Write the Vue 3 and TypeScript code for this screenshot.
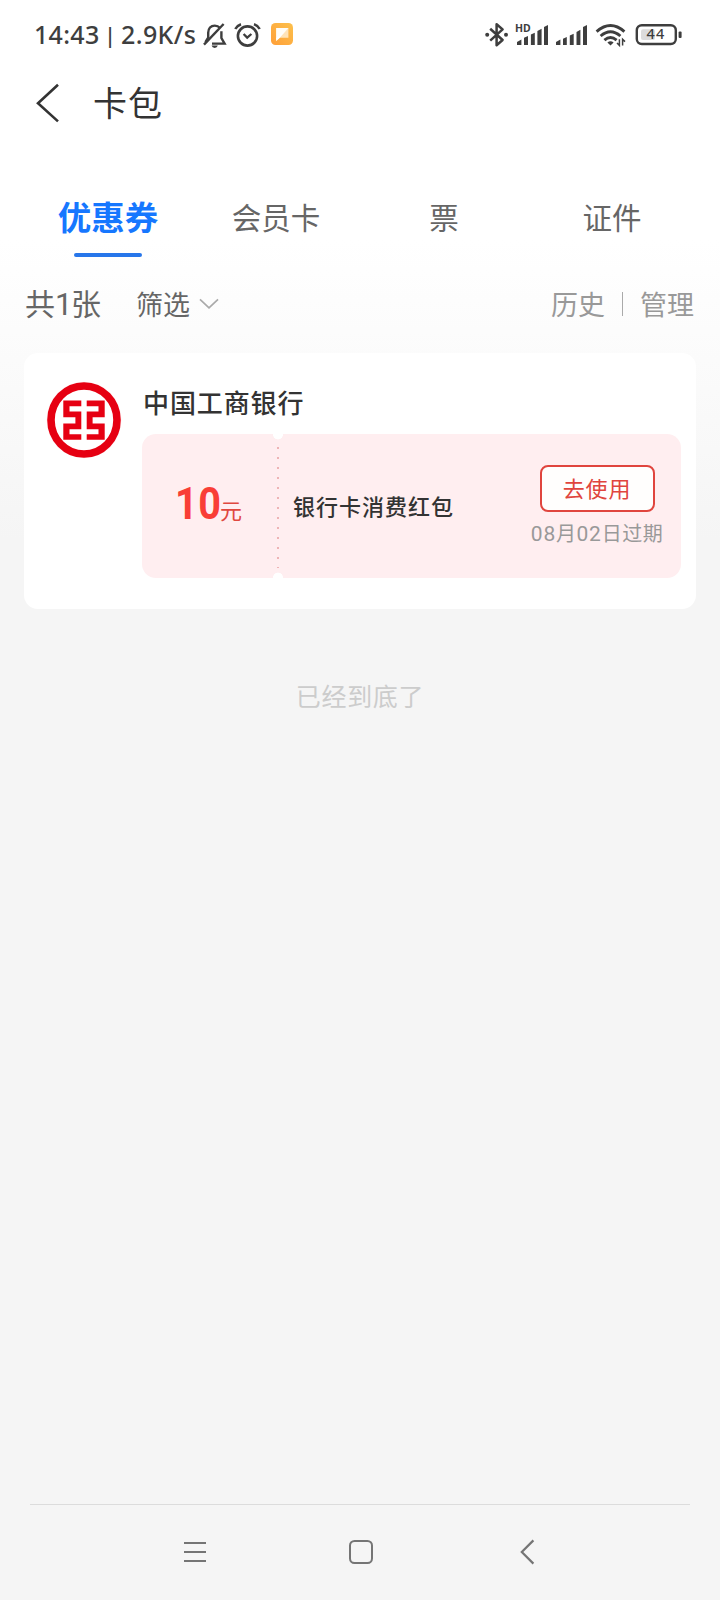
<script setup lang="ts">
interface Tab {
  label: string
  active: boolean
}

const tabs: Tab[] = [
  { label: '优惠券', active: true },
  { label: '会员卡', active: false },
  { label: '票', active: false },
  { label: '证件', active: false },
]

const coupon = {
  bank: '中国工商银行',
  amount: '10',
  unit: '元',
  name: '银行卡消费红包',
  expiry: { month: '08', day: '02' },
}
</script>

<template>
  <div class="screen">
    <header class="status">
      <div class="status-left">
        <span class="clock">14:43</span>
        <span class="pipe">|</span>
        <span class="speed">2.9K/s</span>
        <svg class="bell" width="24" height="26" viewBox="0 0 24 26" fill="none" stroke="#3e3e3e" stroke-width="2.4">
          <path d="M5.2 15V9.8C5.2 5.3 7.8 2.6 11.8 2.6C14 2.6 15.6 3.4 16.8 4.8M18.4 8.2V15L21.6 20.6H9M5.2 14.5L2.4 19.2" />
          <path d="M1 21.6L20.6 1" />
          <path d="M8.6 22.6H14.8A3.2 3.2 0 0 1 8.6 22.6Z" fill="#3e3e3e" stroke="none" />
        </svg>
        <svg class="alarm" width="27" height="26" viewBox="0 0 27 26" fill="none" stroke="#3e3e3e" stroke-width="2.6">
          <circle cx="13.5" cy="14" r="9.6" />
          <path d="M9.6 12L13.2 15.6L17.4 12" stroke-width="2.3" />
          <path d="M1.3 7Q3 3.6 7 2.2M20 2.2Q24 3.6 25.7 7" stroke-width="2.5" />
        </svg>
        <svg class="note" width="22" height="22" viewBox="0 0 22 22">
          <defs>
            <linearGradient id="noteBg" x1="0" y1="1" x2="1" y2="0">
              <stop offset="0" stop-color="#ff9f38" />
              <stop offset="1" stop-color="#fcc04c" />
            </linearGradient>
          </defs>
          <rect width="22" height="22" rx="4.5" fill="url(#noteBg)" />
          <path d="M5.2 5H17.4V14.8H8.8L5.2 18Z" fill="#ffe3b8" />
          <path d="M5.2 18V15.2L17.4 5L8.8 14.8Z" fill="#fff" />
          <path d="M5.2 5H17.4L5.2 16.4Z" fill="#fff" opacity=".9" />
        </svg>
      </div>
      <div class="status-right">
        <svg width="202" height="28" viewBox="0 0 202 28" fill="none" stroke="#3e3e3e">
          <path d="M5.2 8.8L17.6 20L11.6 25.2V4.2L17.6 9.4L5.2 20.6" stroke-width="2.5" stroke-linejoin="round" />
          <circle cx="2.2" cy="14.7" r="2" fill="#3e3e3e" stroke="none" />
          <circle cx="21" cy="14.7" r="2" fill="#3e3e3e" stroke="none" />
          <g fill="#3e3e3e" stroke="none">
            <text class="hd" x="30" y="12.2">HD</text>
            <path d="M32 25V22L36.4 19.6V25ZM39 25V17.8L43 16V25ZM45.9 25V14.6L49.8 12.8V25ZM52.4 25V11L56.6 8.8V25ZM59 25V7L63 5V25Z" />
            <path d="M71 25V22L75.4 19.6V25ZM78 25V18.8L81.8 17V25ZM84.8 25V15.6L88.7 13.8V25ZM91.5 25V12L95.4 9.8V25ZM98 25V7L102 5V25Z" />
          </g>
          <g stroke-width="2.9">
            <path d="M111.6 11.6Q125.5 -0.4 139.4 11.6" />
            <path d="M115.6 16Q125.5 7.6 135.4 16" />
            <path d="M119.4 20.2Q125.5 15 131.6 20.2" />
          </g>
          <path d="M122.4 22.4Q125.5 20.2 128.6 22.4L125.5 25.6Z" fill="#3e3e3e" stroke="none" />
          <path d="M134.4 19.2V25.4L132 23M137.6 25.4V19.2L140 21.6" stroke-width="1.5" />
          <rect x="151.8" y="5.2" width="39" height="18.8" rx="5" stroke-width="2.4" />
          <rect x="156" y="9.2" width="14" height="10.8" rx="2" fill="#dcdcdc" stroke="none" />
          <rect x="193.6" y="11.4" width="3" height="6.6" rx="1" fill="#3e3e3e" stroke="none" />
          <text class="battery" x="161.4" y="19.4" fill="#3e3e3e" stroke="none">44</text>
        </svg>
      </div>
    </header>

    <div class="titlebar">
      <svg class="back" width="24" height="40" viewBox="0 0 24 40" fill="none" stroke="#333" stroke-width="2.6">
        <path d="M23 1.8L3 20.2L23 38.4" />
      </svg>
      <h1>卡包</h1>
    </div>

    <nav class="tabs">
      <div v-for="tab in tabs" :key="tab.label" class="tab" :class="{ active: tab.active }">
        <span>{{ tab.label }}</span>
      </div>
    </nav>

    <div class="filters">
      <span class="count">共<b>1</b>张</span>
      <span class="filter">筛选</span>
      <svg class="down" width="20" height="12" viewBox="0 0 20 12" fill="none" stroke="#aaa" stroke-width="1.7">
        <path d="M1 1.4L10 9.8L19 1.4" />
      </svg>
      <span class="history">历史</span>
      <i class="divider"></i>
      <span class="manage">管理</span>
    </div>

    <section class="card">
      <svg class="logo" width="76" height="78" viewBox="0 0 76 78">
        <ellipse cx="38" cy="39" rx="37.4" ry="38.2" fill="#fdebed" />
        <ellipse cx="38" cy="39" rx="33" ry="34" fill="#fff" stroke="#e60012" stroke-width="7.6" />
        <g fill="#e60012">
          <path d="M17.3 19.5H35.3V25.2H23.5V30.4H35.3V48.2H23.5V53.3H35.3V58.8H17.3V42.4H29.4V36.2H17.3Z" />
          <path d="M40.7 19.5H58.7V36.2H46.6V42.4H58.7V58.8H40.7V53.3H52.5V48.2H40.7V30.4H52.5V25.2H40.7Z" />
        </g>
      </svg>
      <div class="body">
        <h2>{{ coupon.bank }}</h2>
        <div class="coupon">
          <div class="value">
            <b>{{ coupon.amount }}</b><span>{{ coupon.unit }}</span>
          </div>
          <div class="perforation"></div>
          <div class="name">{{ coupon.name }}</div>
          <div class="action">
            <button type="button">去使用</button>
            <p><em>{{ coupon.expiry.month }}</em>月<em>{{ coupon.expiry.day }}</em>日过期</p>
          </div>
        </div>
      </div>
    </section>

    <p class="end">已经到底了</p>

    <footer class="navbar">
      <svg width="24" height="28" viewBox="0 0 24 28" fill="none" stroke="#757575" stroke-width="2">
        <path d="M1 5H23M1 14H23M1 23H23" />
      </svg>
      <svg class="home" width="26" height="28" viewBox="0 0 26 28" fill="none" stroke="#757575" stroke-width="2">
        <rect x="2" y="3" width="22" height="22" rx="4.5" />
      </svg>
      <svg width="16" height="28" viewBox="0 0 16 28" fill="none" stroke="#757575" stroke-width="2.2">
        <path d="M14.4 2.4L2.8 14L14.4 25.6" />
      </svg>
    </footer>
  </div>
</template>

<style>
body {
  margin: 0;
  background: #f5f5f5;
}
</style>

<style scoped>
* {
  box-sizing: border-box;
}
.screen {
  width: 720px;
  height: 1600px;
  display: flex;
  flex-direction: column;
  background: linear-gradient(#fff 0, #fff 240px, #f5f5f5 540px);
  font-family: "Noto Sans CJK SC", sans-serif;
  color: #333;
  overflow: hidden;
}
h1, h2, p {
  margin: 0;
}
.status {
  height: 68px;
  padding: 0 33px 0 34px;
  display: flex;
  justify-content: space-between;
  align-items: center;
}
.status-left {
  display: flex;
  align-items: center;
  font-family: "Noto Sans", sans-serif;
  font-weight: 500;
  font-size: 25px;
  line-height: 40px;
  color: #3e3e3e;
  white-space: nowrap;
}
.clock {
  width: 73px;
  letter-spacing: 0.3px;
}
.pipe {
  width: 14px;
  margin-top: -1px;
  font-size: 22px;
  text-indent: -3px;
}
.speed {
  width: 80px;
  letter-spacing: 0.4px;
}
.bell {
  margin: 3px 7px 0 2px;
}
.alarm {
  margin: 1px 10px 0 0;
}
.status-right svg {
  display: block;
}
.hd {
  font: 700 10.5px "Noto Sans", sans-serif;
}
.battery {
  font: 500 14.5px "Noto Sans", sans-serif;
  letter-spacing: 1.2px;
}
.titlebar {
  height: 70px;
  padding-left: 35px;
  display: flex;
  align-items: center;
}
.titlebar h1 {
  margin: -2px 0 0 34px;
  font-size: 34px;
  font-weight: 400;
  line-height: 50px;
  letter-spacing: 1px;
}
.tabs {
  height: 119px;
  padding: 50px 24px 0;
  display: grid;
  grid-template-columns: repeat(4, 1fr);
}
.tab {
  display: flex;
  flex-direction: column;
  align-items: center;
  font-size: 29.5px;
  line-height: 56px;
  color: #666;
}
.tab.active {
  font-size: 33.5px;
  font-weight: 700;
  color: #1677ff;
}
.tab.active::after {
  content: "";
  width: 68px;
  height: 4px;
  margin-top: 9px;
  border-radius: 2px;
  background: #2776ea;
}
.filters {
  height: 96px;
  padding: 0 25px 3px 25px;
  display: flex;
  align-items: center;
  font-size: 27px;
  color: #666;
}
.count {
  width: 111px;
  margin-top: -4px;
  font-size: 30px;
}
.count b {
  font: 400 31px Roboto, sans-serif;
  letter-spacing: -1.5px;
}
.down {
  margin: 1px 0 0 9px;
}
.history {
  margin-left: auto;
  color: #999;
}
.manage {
  margin-right: 1px;
  color: #999;
}
.divider {
  width: 1px;
  height: 24px;
  margin: 0 17px;
  background: #aaa;
}
.card {
  height: 256px;
  margin: 0 24px;
  padding: 28px 15px 31px 22px;
  display: flex;
  align-items: flex-start;
  border-radius: 14px;
  background: #fff;
}
.logo {
  flex: none;
  margin-left: -0.5px;
}
.body {
  flex: 1;
  margin-left: 20.5px;
}
.body h2 {
  height: 53px;
  padding: 2px 0 0 1px;
  font-size: 26px;
  font-weight: 500;
  line-height: 38px;
  letter-spacing: 0.9px;
}
.coupon {
  height: 144px;
  display: flex;
  align-items: center;
  border-radius: 14px;
  background: #ffeef0;
}
.value {
  width: 131px;
  padding: 0 0 4px 33px;
  display: flex;
  align-items: baseline;
  color: #f93e36;
}
.value b {
  width: 45px;
  font: 700 45px/60px Roboto, sans-serif;
  letter-spacing: 0.5px;
  transform: scaleX(0.88);
  transform-origin: left;
}
.value span {
  font-size: 22px;
  color: #e0483f;
}
.perforation {
  width: 10px;
  height: 144px;
  background:
    radial-gradient(circle at 5px 0.5px, #fff 4.6px, transparent 5.2px),
    radial-gradient(circle at 5px 143.5px, #fff 4.6px, transparent 5.2px),
    repeating-linear-gradient(transparent 0 3px, #eeb4b6 3px 5px, transparent 5px 10px) 4px 10px / 2px 124px no-repeat;
}
.name {
  padding: 0 0 2px 10px;
  font-size: 22px;
  font-weight: 500;
  letter-spacing: 1px;
}
.action {
  width: 136px;
  margin: 6px 16px 0 auto;
  display: flex;
  flex-direction: column;
  align-items: center;
}
.action button {
  width: 115px;
  height: 47px;
  padding: 0 0 2px;
  border: 2px solid #e0453e;
  border-radius: 8px;
  background: #fffefd;
  color: #e0453e;
  font: 400 22px/38px "Noto Sans CJK SC", sans-serif;
  letter-spacing: 0.8px;
}
.action p {
  margin-top: 1px;
  font-size: 20px;
  line-height: 40px;
  letter-spacing: 0.5px;
  color: #999;
  white-space: nowrap;
}
.action em {
  font-family: Roboto, sans-serif;
  font-size: 21px;
  font-style: normal;
  letter-spacing: 0.8px;
}
.end {
  margin-top: 66px;
  text-align: center;
  font-size: 25px;
  line-height: 40px;
  letter-spacing: 0.7px;
  color: #ccc;
}
.navbar {
  height: 96px;
  margin: auto 30px 0;
  padding: 0 155px 1px 153px;
  display: flex;
  justify-content: space-between;
  align-items: center;
  border-top: 1px solid #dcdcdc;
}
.home {
  margin-right: 4px;
}
</style>
